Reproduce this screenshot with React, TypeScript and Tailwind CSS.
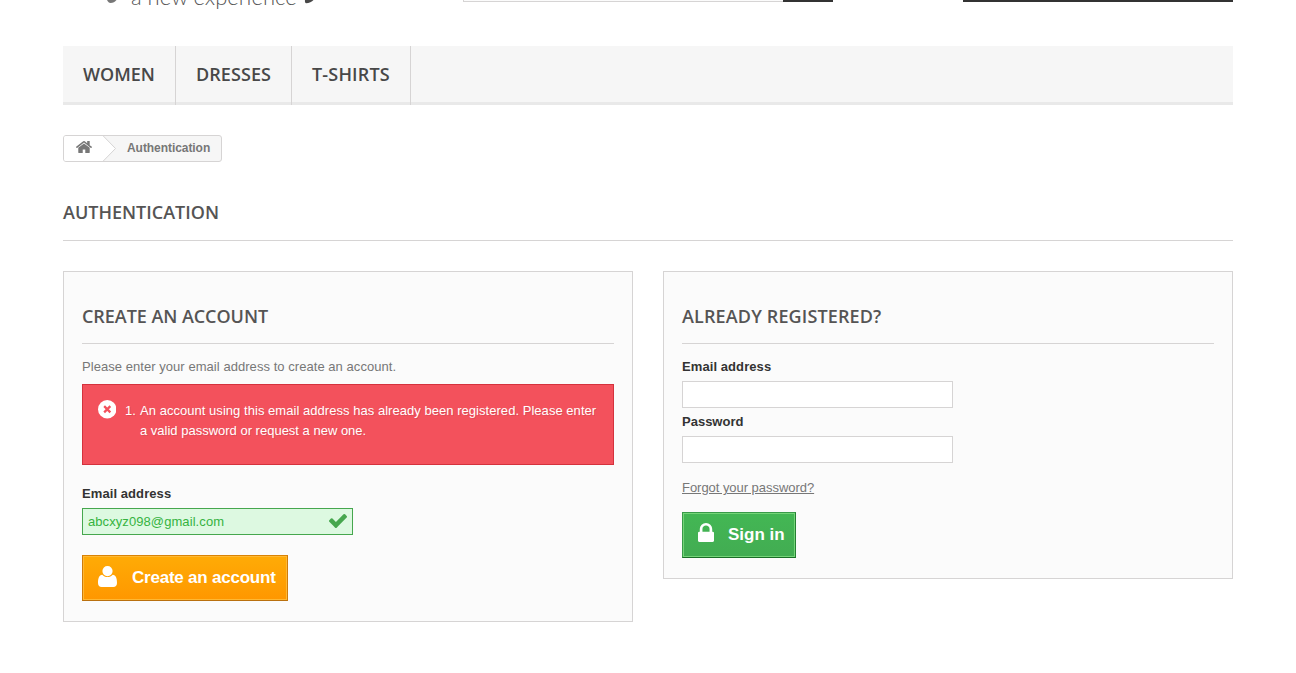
import type { ReactNode } from "react";

const paths = {
  home: "M1472 992v480q0 26-19 45t-45 19h-384v-384h-256v384h-384q-26 0-45-19t-19-45v-480q0-1 .5-3t.5-3l575-474 575 474q1 2 1 6zm223-69l-62 74q-8 9-21 11h-3q-13 0-21-7l-692-577-692 577q-12 8-24 7-13-2-21-11l-62-74q-8-10-7-23.5t11-21.5l719-599q32-26 76-26t76 26l244 204v-195q0-14 9-23t23-9h192q14 0 23 9t9 23v408l219 182q10 8 11 21.5t-7 23.5z",
  user: "M9.500 0a5.100 5.100 0 0 1 0 10.200a5.100 5.100 0 0 1 0-10.200zM4.300 8.700C1 9.100 0 12.300 0 17c0 2.500 1.500 4 3.600 4h11.800c2.100 0 3.600-1.500 3.600-4 0-4.700-1-7.900-4.300-8.300C13.300 10.300 11.600 11 9.500 11S5.700 10.300 4.300 8.700z",
  lock: "M640 768h512v-192q0-106-75-181t-181-75-181 75-75 181v192zm832 96v576q0 40-28 68t-68 28h-960q-40 0-68-28t-28-68v-576q0-40 28-68t68-28h32v-192q0-184 132-316t316-132 316 132 132 316v192h32q40 0 68 28t28 68z",
  check: "M1671 566q0 40-28 68l-724 724-136 136q-28 28-68 28t-68-28l-136-136-362-362q-28-28-28-68t28-68l136-136q28-28 68-28t68 28l294 295 656-657q28-28 68-28t68 28l136 136q28 28 28 68z",
};

function Icon({ d, box, className }: { d: string; box: string; className: string }) {
  return (
    <svg viewBox={box} preserveAspectRatio="none" fill="currentColor" className={className}>
      <path d={d} />
    </svg>
  );
}

function Header() {
  return (
    <header className="flex h-[46px] items-start">
      <div className="flex h-3 w-[400px] items-start pl-[44px]">
        <svg viewBox="0 0 10 4" className="h-1 w-2.5 text-[#777777]" fill="currentColor">
          <path d="M0 0h9.500C8 2 6 3 3.500 3 2 3 1 2 0 0z" />
        </svg>
        <span className="-mt-[17px] ml-[14px] w-[166px] whitespace-nowrap font-['Lato'] text-[22px] leading-[28px] font-light text-[#555555]">
          a new experience
        </span>
        <svg viewBox="0 0 10 4" className="ml-[7px] h-1 w-2.5 text-[#484848]" fill="currentColor">
          <path d="M1 0h8.500C8 1.800 5 3.300 2 3.300 1 2.800.7 1.500 1 0z" />
        </svg>
      </div>
      <div className="h-0.5 w-[320px] border-b border-l border-[#d6d4d4] bg-[#fbfbfb]" />
      <div className="h-0.5 w-[50px] bg-[#333333]" />
      <div className="ml-auto h-0.5 w-[270px] bg-[#333333]" />
    </header>
  );
}

function Nav() {
  const item = "h-[59px] border-r border-[#d6d4d4] px-5 pt-[17px] leading-[22px] whitespace-nowrap";
  return (
    <nav className="flex h-[59px] border-b-[3px] border-[#e9e9e9] bg-[#f6f6f6] font-['Open_Sans'] text-[18px] font-semibold text-[#484848]">
      <a className={`${item} w-[113px]`}>WOMEN</a>
      <a className={`${item} w-[116px] tracking-[0.080px]`}>DRESSES</a>
      <a className={`${item} w-[119px] tracking-[0.180px]`}>T-SHIRTS</a>
    </nav>
  );
}

function Breadcrumb() {
  return (
    <div className="mt-[30px] flex h-[27px] w-[159px] overflow-hidden rounded-[3px] border border-[#d6d4d4] bg-[#f6f6f6] text-[12px] leading-[24px] font-bold text-[#777777]">
      <div className="w-[39px] bg-white pt-[5px] pl-[12px]">
        <Icon d={paths.home} box="90 253 1612 1283" className="h-[12px] w-[16px]" />
      </div>
      <svg viewBox="0 0 13 25" className="h-[25px] w-[13px]" fill="none">
        <path d="M0 0 12.500 12.500 0 25z" fill="#fff" />
        <path d="M.3 0 12.500 12.500.3 25" stroke="#d6d4d4" />
      </svg>
      <span className="pl-[11px] tracking-[-0.060px]">Authentication</span>
    </div>
  );
}

function Panel({
  title,
  height,
  tracking,
  children,
}: {
  title: string;
  height: string;
  tracking: string;
  children: ReactNode;
}) {
  return (
    <section className={`${height} flex w-[570px] flex-col items-start border border-[#d6d4d4] bg-[#fbfbfb] px-[18px]`}>
      <h3
        className={`${tracking} mt-[32px] h-[40px] w-full border-b border-[#d6d4d4] font-['Open_Sans'] text-[18px] leading-[25px] font-semibold text-[#555454]`}
      >
        {title}
      </h3>
      {children}
    </section>
  );
}

const label = "text-[13px] leading-[20px] font-bold text-[#333333]";
const field = "h-[27px] w-[271px] border border-[#d6d4d4] bg-white px-[5px] text-[13px] outline-none";

export default function App() {
  return (
    <main className="h-[673px] overflow-hidden bg-white px-[63px] font-['Liberation_Sans',sans-serif] text-[13px] leading-[18px] text-[#777777]">
      <Header />
      <Nav />
      <Breadcrumb />
      <h1 className="mt-[39px] h-[40px] border-b border-[#d6d4d4] font-['Open_Sans'] text-[18px] leading-[22px] font-semibold text-[#555454]">
        AUTHENTICATION
      </h1>
      <div className="mt-[30px] flex items-start justify-between">
        <Panel title="CREATE AN ACCOUNT" height="h-[351px]" tracking="tracking-[-0.050px]">
          <p className="mt-[14px] tracking-[0.050px]">Please enter your email address to create an account.</p>
          <div className="mt-[8px] flex h-[81px] w-full border border-[#d4323d] bg-[#f3515c] pt-[16px] pl-[15px] leading-[20px] text-white [text-shadow:1px_1px_rgba(0,0,0,0.1)]">
            <svg viewBox="0 0 18 18" className="-mt-px -ml-[0.500px] h-[18.500px] w-[18.500px] shrink-0">
              <circle cx="9" cy="9" r="9" fill="#fff" />
              <path d="M6 6 12 12M12 6 6 12" stroke="#f3515c" strokeWidth="2.200" />
            </svg>
            <span className="ml-[9px] w-[15px]">1.</span>
            <p className="w-[470px] whitespace-nowrap">
              <span className="tracking-[0.040px]">
                An account using this email address has already been registered. Please enter
              </span>
              <br />a valid password or request a new one.
            </p>
          </div>
          <label className={`${label} mt-[19px] tracking-[0.080px]`}>Email address</label>
          <div className="mt-[4px] flex h-[27px] w-[271px] items-center justify-between border border-[#46a74e] bg-[#ddf9e1] pr-[5px] pl-[5px] text-[#35b33f]">
            <span className="tracking-[0.080px]">abcxyz098@gmail.com</span>
            <Icon d={paths.check} box="121 334 1550 1188" className="-mt-px h-[14px] w-[18px] text-[#46a74e]" />
          </div>
          <button className="mt-[20px] flex h-[46px] w-[206px] border border-t-[#d98305] border-r-[#ce7b0a] border-b-[#b9700f] border-l-[#ce7b0a] bg-linear-to-b from-[#ffab06] to-[#ff9700] pt-[10px] pl-[15px] text-[17px] leading-[22px] font-bold text-white shadow-[inset_0_0_0_1px_#ffb833]">
            <Icon d={paths.user} box="0 0 19 21" className="h-[21px] w-[19px]" />
            <span className="mt-px ml-[15px] tracking-[-0.220px] whitespace-nowrap">Create an account</span>
          </button>
        </Panel>
        <Panel title="ALREADY REGISTERED?" height="h-[308px]" tracking="tracking-[0.140px]">
          <label className={`${label} mt-[13px] tracking-[0.080px]`}>Email address</label>
          <input className={`${field} mt-[4px]`} />
          <label className={`${label} mt-[4px]`}>Password</label>
          <input className={`${field} mt-[4px]`} />
          <a className="mt-[16px] tracking-[-0.040px] underline">Forgot your password?</a>
          <button className="mt-[15px] flex h-[46px] w-[114px] border border-t-[#399a49] border-r-[#247f32] border-b-[#1a6d27] border-l-[#399a49] bg-linear-to-b from-[#43b754] to-[#42ac52] pt-[10px] pl-[15px] text-[17px] leading-[22px] font-bold text-white shadow-[inset_0_0_0_1px_#74d578]">
            <Icon d={paths.lock} box="320 128 1152 1408" className="h-[19px] w-[16px]" />
            <span className="mt-px ml-[14px] whitespace-nowrap">Sign in</span>
          </button>
        </Panel>
      </div>
    </main>
  );
}
